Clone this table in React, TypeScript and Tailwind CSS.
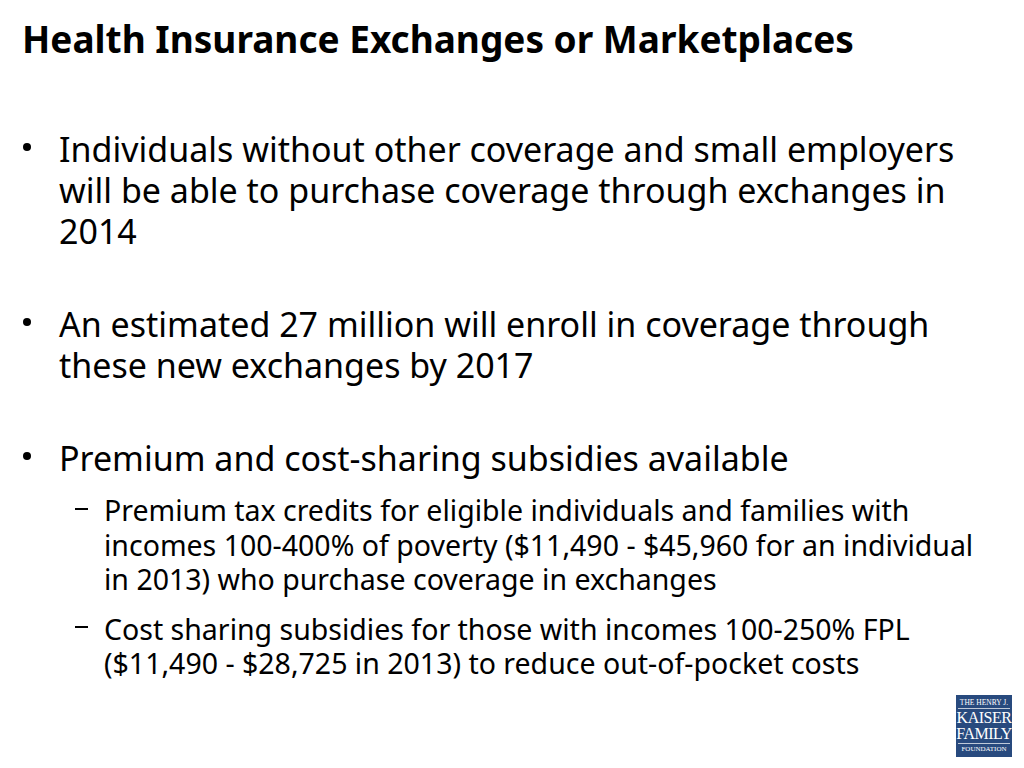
const bullets = [
  {
    text: "Individuals without other coverage and small employers will be able to purchase coverage through exchanges in 2014",
  },
  {
    text: "An estimated 27 million will enroll in coverage through these new exchanges by 2017",
  },
  {
    text: "Premium and cost-sharing subsidies available",
    subs: [
      "Premium tax credits for eligible individuals and families with incomes 100-400% of poverty ($11,490 - $45,960 for an individual in 2013) who purchase coverage in exchanges",
      "Cost sharing subsidies for those with incomes 100-250% FPL ($11,490 - $28,725 in 2013) to reduce out-of-pocket costs",
    ],
  },
];

function KffLogo() {
  return (
    <div
      className="flex w-[56px] h-[62px] flex-col items-center justify-center bg-[#284a7e] text-white"
      style={{ fontFamily: '"Liberation Serif", serif' }}
    >
      <div className="text-[7.5px] leading-[9px]">THE HENRY J.</div>
      <div className="w-[52px] h-px bg-white/70 my-[1px]" />
      <div className="text-[16px] leading-[16px] tracking-[-0.5px]">KAISER</div>
      <div className="text-[16px] leading-[16px] tracking-[-0.5px]">FAMILY</div>
      <div className="w-[52px] h-px bg-white/70 my-[1px]" />
      <div className="text-[7px] leading-[9px]">FOUNDATION</div>
    </div>
  );
}

export default function App() {
  return (
    <div
      className="relative w-[1024px] h-[768px] bg-white text-black overflow-hidden"
      style={{ fontFamily: '"Noto Sans", "Open Sans", sans-serif' }}
    >
      <div className="pl-[22px] pt-[14px]">
        <h1 className="text-[37px] font-bold leading-[50px]">
          Health Insurance Exchanges or Marketplaces
        </h1>
      </div>

      <ul className="pl-[22px] pr-[40px] mt-[65px] flex flex-col gap-[52px]">
        {bullets.map((b, i) => (
          <li key={i}>
            <div className="flex">
              <span className="w-[37px] shrink-0 h-[41px] flex items-center">
                <span className="ml-[1px] mb-[6px] w-[8px] h-[8px] rounded-full bg-black" />
              </span>
              <p className="text-[34px] leading-[41px]">{b.text}</p>
            </div>
            {b.subs && (
              <ul className="mt-[14px] pl-[53px] flex flex-col gap-[15px]">
                {b.subs.map((s, j) => (
                  <li key={j} className="flex">
                    <span className="w-[29px] shrink-0 h-[34.5px] flex items-center">
                      <span className="mb-[3px] w-[13px] h-[2px] bg-black" />
                    </span>
                    <p className="text-[28.5px] leading-[34.5px]">{s}</p>
                  </li>
                ))}
              </ul>
            )}
          </li>
        ))}
      </ul>

      <div className="absolute right-[12px] bottom-[11px]">
        <KffLogo />
      </div>
    </div>
  );
}
